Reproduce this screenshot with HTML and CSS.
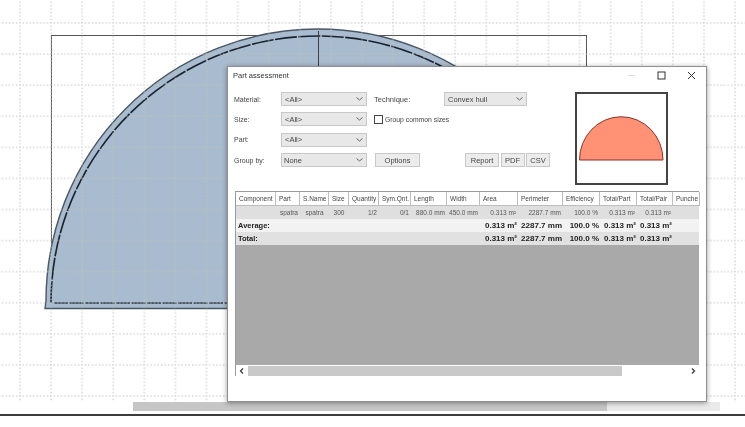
FILE: index.html
```html
<!DOCTYPE html>
<html lang="en">
<head>
<meta charset="utf-8">
<title>Part assessment</title>
<link rel="stylesheet" href="styles.css">
</head>
<body>
<div class="app">
  <main class="canvas">
    <svg class="drawing" width="745" height="414" viewBox="0 0 745 414">
      <defs>
        <pattern id="grid" x="19" y="22" width="31.09" height="31.09" patternUnits="userSpaceOnUse">
          <path d="M1 0V31.09M0 1H31.09" class="grid-line"/>
        </pattern>
      </defs>
      <rect x="51.5" y="35.5" width="535" height="273" class="sheet"/>
      <path d="M45 308.500 L46 301 A272 272 0 0 1 590 301 L590 308.500Z" class="part"/>
      <path d="M51 303 A267 267 0 0 1 585 303" class="cut"/>
      <path d="M54 303H585" class="cut-bottom"/>
      <path d="M318.500 31V120" class="axis"/>
      <rect x="0" y="0" width="745" height="402" fill="url(#grid)"/>
    </svg>
    <div class="taskbar"><span class="taskbar-thumb"></span></div>

    <section class="dialog">
      <header class="titlebar">
        <span class="title">Part assessment</span>
        <div class="window-buttons">
          <svg class="win-icon win-min" width="9" height="9" viewBox="0 0 9 9"><path d="M1 4.500H8"/></svg>
          <svg class="win-icon" width="9" height="9" viewBox="0 0 9 9"><rect x="1" y="1" width="7" height="7"/></svg>
          <svg class="win-icon" width="9" height="9" viewBox="0 0 9 9"><path d="M1 1L8 8M8 1L1 8"/></svg>
        </div>
      </header>

      <div class="controls">
        <div class="form">
          <label class="lbl">Material:</label>
          <div class="select"><span>&lt;All&gt;</span><svg class="chev" width="7" height="4" viewBox="0 0 7 4"><path d="M.5 .5L3.500 3L6.500 .5"/></svg></div>
          <div class="extra">
            <label class="lbl lbl-tech">Technique:</label>
            <div class="select sel-tech"><span>Convex hull</span><svg class="chev" width="7" height="4" viewBox="0 0 7 4"><path d="M.5 .5L3.500 3L6.500 .5"/></svg></div>
          </div>

          <label class="lbl">Size:</label>
          <div class="select"><span>&lt;All&gt;</span><svg class="chev" width="7" height="4" viewBox="0 0 7 4"><path d="M.5 .5L3.500 3L6.500 .5"/></svg></div>
          <div class="extra check"><span class="box"></span><span>Group common sizes</span></div>

          <label class="lbl">Part:</label>
          <div class="select"><span>&lt;All&gt;</span><svg class="chev" width="7" height="4" viewBox="0 0 7 4"><path d="M.5 .5L3.500 3L6.500 .5"/></svg></div>
          <div class="extra"></div>

          <label class="lbl">Group by:</label>
          <div class="select"><span class="tight">None</span><svg class="chev" width="7" height="4" viewBox="0 0 7 4"><path d="M.5 .5L3.500 3L6.500 .5"/></svg></div>
          <div class="extra actions">
            <button class="btn btn-options">Options</button>
            <div class="export">
              <button class="btn btn-report">Report</button>
              <button class="btn btn-pdf">PDF</button>
              <button class="btn btn-csv">CSV</button>
            </div>
          </div>
        </div>
        <div class="preview">
          <svg width="89" height="89" viewBox="0 0 89 89"><path d="M2.500 66A41.500 43 0 0 1 86 66Z" class="preview-shape"/></svg>
        </div>
      </div>

      <div class="table">
        <div class="row head">
          <span>Component</span><span>Part</span><span>S.Name</span><span>Size</span><span>Quantity</span><span>Sym.Qnt.</span><span>Length</span><span>Width</span><span>Area</span><span>Perimeter</span><span>Efficiency</span><span>Total/Part</span><span>Total/Pair</span><span>Punche</span>
        </div>
        <div class="row data">
          <span></span><span class="r">spatra</span><span class="c">spatra</span><span class="c">300</span><span class="r">1/2</span><span class="r">0/1</span><span class="r">880.0 mm</span><span class="r">450.0 mm</span><span class="r">0.313 m²</span><span class="r">2287.7 mm</span><span class="r">100.0 %</span><span class="r">0.313 m²</span><span class="r">0.313 m²</span><span></span>
        </div>
        <div class="row sum light">
          <span class="wide">Average:</span><span class="r">0.313 m²</span><span class="r">2287.7 mm</span><span class="r">100.0 %</span><span class="r">0.313 m²</span><span class="r">0.313 m²</span><span></span>
        </div>
        <div class="row sum">
          <span class="wide">Total:</span><span class="r">0.313 m²</span><span class="r">2287.7 mm</span><span class="r">100.0 %</span><span class="r">0.313 m²</span><span class="r">0.313 m²</span><span></span>
        </div>
        <div class="table-empty"></div>
        <div class="scrollbar">
          <svg class="arrow" width="12" height="10" viewBox="0 0 12 10"><path d="M7 2.500L4.500 5L7 7.500"/></svg>
          <span class="thumb"></span>
          <svg class="arrow arrow-right" width="12" height="10" viewBox="0 0 12 10"><path d="M5 2.500L7.500 5L5 7.500"/></svg>
        </div>
      </div>
    </section>
  </main>
  <footer class="baseline"></footer>
</div>
</body>
</html>
```

FILE: styles.css
```css
* { box-sizing: border-box; }
html, body { margin: 0; padding: 0; background: #fff; }
body { width: 745px; height: 427px; overflow: hidden; font-family: "Liberation Sans", Arial, sans-serif; font-size: 7px; color: #333; }
.app { width: 745px; height: 427px; display: flex; flex-direction: column; filter: blur(.35px); }
.canvas { position: relative; height: 414px; flex: none; }
.baseline { height: 1.500px; background: #3c3c3c; flex: none; }

.drawing { position: absolute; left: 0; top: 0; }
.grid-line { fill: none; stroke: #bcc5ba; stroke-width: 1; stroke-dasharray: 1.500 2; }
.sheet { fill: #fff; stroke: #555; stroke-width: 1; }
.part { fill: #a9bbce; stroke: #4a5766; stroke-width: 1.400; }
.cut { fill: none; stroke: #1a2230; stroke-width: 1.600; stroke-dasharray: 22 1.500; }
.cut-bottom { fill: none; stroke: #2e3a4a; stroke-width: 1.600; stroke-dasharray: 14 1.500; }
.axis { stroke: #3a3f46; stroke-width: 1; }

.taskbar { position: absolute; left: 133px; top: 402px; width: 587px; height: 9px; background: #eaeaea; }
.taskbar-thumb { display: block; width: 474px; height: 9px; background: #c6c6c6; }

.dialog { position: absolute; left: 227px; top: 66px; width: 480px; height: 336px; background: #fff; border: 1px solid #8f8f8f; box-shadow: 0 1px 5px rgba(0,0,0,.4); display: flex; flex-direction: column; padding: 0 7px; }

.titlebar { height: 25px; flex: none; display: flex; align-items: center; justify-content: space-between; }
.title { font-size: 7.500px; color: #333; margin-left: -2px; margin-top: -9px; }
.window-buttons { display: flex; gap: 21px; margin-right: 3px; margin-top: -9px; }
.win-icon { fill: none; stroke: #333; stroke-width: 1; }
.win-min { stroke: #ddd; }

.controls { display: flex; height: 99px; flex: none; justify-content: space-between; margin-right: 31px; }
.form { width: 315px; display: grid; grid-template-columns: 46px 86px 1fr; grid-auto-rows: 14px; row-gap: 6.400px; align-items: center; align-self: flex-start; }
.lbl { font-size: 7px; color: #444; margin-left: -1px; }
.select { height: 14px; background: #e8e8e8; border: 1px solid #c8c8c8; display: flex; align-items: center; justify-content: space-between; padding: 0 3px; font-size: 7.500px; color: #444; }
.tight { margin-left: -1px; }
.chev { fill: none; stroke: #666; stroke-width: 1; flex: none; }
.extra { display: flex; align-items: center; margin-left: 7px; height: 14px; }
.lbl-tech { width: 70px; flex: none; font-size: 7.500px; margin-left: 0; }
.sel-tech { width: 83px; flex: none; }
.check { gap: 2px; font-size: 6.800px; color: #444; }
.box { width: 9px; height: 9px; background: #fff; border: 1px solid #444; flex: none; }
.actions { justify-content: space-between; padding-left: 1px; }
.btn { height: 14px; padding: 0; background: #ececec; border: 1px solid #c8c8c8; font: 7.500px "Liberation Sans", Arial, sans-serif; color: #444; }
.btn-options { width: 45px; }
.export { display: flex; gap: 1.500px; }
.btn-report { width: 34px; }
.btn-pdf { width: 24px; }
.btn-csv { width: 24px; }

.preview { width: 93px; height: 93px; border: 2px solid #444; background: #fff; flex: none; }
.preview svg { display: block; }
.preview-shape { fill: #ff9274; stroke: #8a2f2a; stroke-width: 1; }

.table { width: 464px; height: 185px; flex: none; display: flex; flex-direction: column; background: #fff; border-top: 1px solid #9a9a9a; border-left: 1px solid #9a9a9a; }
.row { display: grid; grid-template-columns: 40px 24px 29px 20px 30px 32px 36px 33px 38px 45px 37px 37px 36px 27px; height: 13px; align-items: center; font-size: 6.500px; flex: none; }
.row > span { white-space: nowrap; overflow: hidden; padding: 0 2px; }
.head { height: 14px; background: #fff; }
.head > span { height: 14px; line-height: 14px; border-right: 1px solid #bdbdbd; border-bottom: 1px solid #bdbdbd; color: #444; padding-left: 3px; }
.data { background: #dfdfdf; color: #555; }
.sum { background: #e1e1e1; font-weight: 700; color: #222; font-size: 8px; }
.sum > span { padding: 0 1px; }
.sum > .wide { font-size: 7.500px; padding-left: 2px; grid-column: span 8; }
.light { background: #f2f2f2; }
.r { text-align: right; }
.c { text-align: center; }
.table-empty { flex: 1; background: #a9a9a9; }
.scrollbar { height: 10px; flex: none; display: flex; background: #fff; margin-top: 1px; align-items: center; }
.arrow { flex: none; fill: none; stroke: #333; stroke-width: 1.200; }
.thumb { width: 374px; height: 10px; background: #c9c9c9; }
.arrow-right { margin-left: auto; }
```
